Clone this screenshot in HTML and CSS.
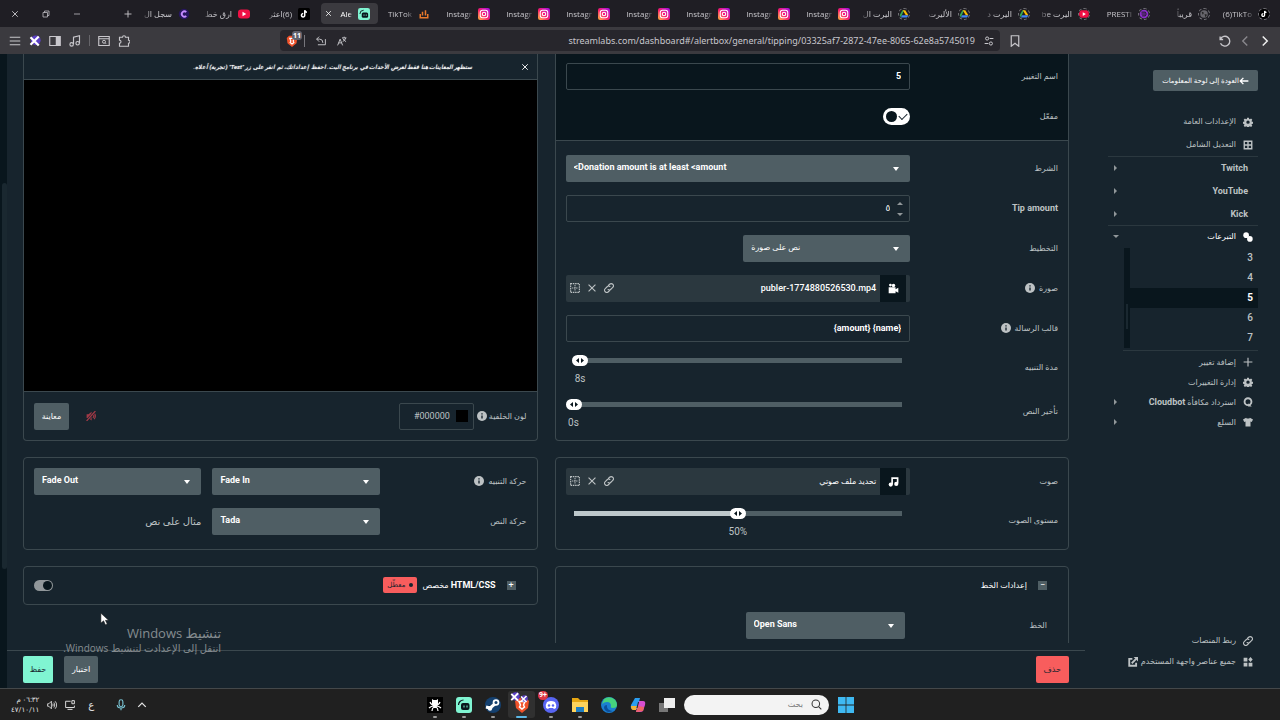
FILE: index.html
```html
<!DOCTYPE html>
<html lang="ar" dir="rtl">
<head>
  <meta charset="UTF-8">
  <meta name="viewport" content="width=device-width, initial-scale=1.0">
  <title>Alert Box</title>
  <link rel="stylesheet" href="styles.css">
</head>
<body>
  <svg class="sprite" viewBox="0 0 16 16">
    <symbol id="gear" viewBox="0 0 16 16"><path fill="currentColor" fill-rule="evenodd" d="M6.500 1h3l.4 2 1.200.5 1.800-1.100 2 2-1.200 1.800.5 1.200 2 .4v2.800l-2 .4-.5 1.200 1.200 1.700-2 2-1.800-1.100-1.200.5-.4 2h-3l-.4-2-1.200-.5-1.800 1.100-2-2 1.200-1.700-.5-1.200-2-.4V7.800l2-.4.5-1.200-1.200-1.800 2-2 1.800 1.100L6.100 3zM8 5.500a2.700 2.700 0 1 0 0 5.400 2.700 2.700 0 0 0 0-5.400z"/></symbol>
    <symbol id="grid" viewBox="0 0 16 16"><path fill="none" stroke="currentColor" stroke-width="2.200" d="M2 2h12v12H2zM8 2v12M2 8h12"/></symbol>
    <symbol id="tips" viewBox="0 0 16 16"><circle cx="5" cy="5" r="4.500" fill="currentColor"/><circle cx="11" cy="11" r="4.500" fill="currentColor"/></symbol>
    <symbol id="plus" viewBox="0 0 16 16"><path stroke="currentColor" stroke-width="1.800" d="M8 1v14M1 8h14"/></symbol>
    <symbol id="bot" viewBox="0 0 16 16"><circle cx="8" cy="7.500" r="5.500" fill="none" stroke="currentColor" stroke-width="3"/><path fill="currentColor" d="M9 10l5 5H8z"/></symbol>
    <symbol id="shirt" viewBox="0 0 16 16"><path fill="currentColor" d="M5 1c1 2 5 2 6 0l5 3-2 4-2-1v8H4V7L2 8 0 4z"/></symbol>
    <symbol id="link" viewBox="0 0 16 16"><path fill="none" stroke="currentColor" stroke-width="1.700" stroke-linecap="round" d="M7 4l2-2a3.400 3.400 0 0 1 5 5l-3 3a3.400 3.400 0 0 1-4.500.3M9 12l-2 2a3.400 3.400 0 0 1-5-5l3-3a3.400 3.400 0 0 1 4.500-.3"/></symbol>
    <symbol id="tiles" viewBox="0 0 16 16"><path fill="currentColor" d="M1 1h6v6H1zM1 9h6v6H1zM9 9h6v6H9zM12 0l3.500 4L12 8 8.500 4z"/></symbol>
    <symbol id="external" viewBox="0 0 16 16"><path fill="none" stroke="currentColor" stroke-width="3" d="M7 3H2v11h11V9M6 10l7-7"/><path fill="currentColor" d="M9 0h7v7z"/></symbol>
    <symbol id="info" viewBox="0 0 16 16"><circle cx="8" cy="8" r="8" fill="currentColor"/><path stroke="#17242d" stroke-width="2.200" d="M8 7v5M8 3.500v2"/></symbol>
    <symbol id="close" viewBox="0 0 16 16"><path stroke="currentColor" stroke-width="1.800" d="M2.500 2.500l11 11M13.500 2.500l-11 11"/></symbol>
    <symbol id="drag" viewBox="0 0 16 16"><path fill="none" stroke="currentColor" stroke-width="1.800" stroke-dasharray="2.400 1.200" d="M1 1h14v14H1z"/><path fill="none" stroke="currentColor" stroke-width="1.500" stroke-dasharray="2 1" d="M8 3v10M3 8h10"/></symbol>
    <symbol id="video" viewBox="0 0 16 16"><circle cx="3.500" cy="3" r="2" fill="currentColor"/><circle cx="8" cy="3.500" r="2.500" fill="currentColor"/><path fill="currentColor" d="M1 6h10v3l4-2v7l-4-2v3H1z"/></symbol>
    <symbol id="note" viewBox="0 0 16 16"><path fill="none" stroke="currentColor" stroke-width="2.400" d="M6 12V3h8v8"/><circle cx="4" cy="12.500" r="3" fill="currentColor"/><circle cx="12" cy="11.500" r="3" fill="currentColor"/></symbol>
    <symbol id="muted" viewBox="0 0 16 16"><path fill="currentColor" d="M1 5h3l5-4v14l-5-4H1z"/><path fill="none" stroke="currentColor" stroke-width="1.800" d="M11 5q3 3 0 6M13 3q4 5 0 10"/><path stroke="#17242d" stroke-width="4" d="M2 15L14 1"/><path stroke="currentColor" stroke-width="2" d="M1 16L15 0"/></symbol>
    <symbol id="arrow" viewBox="0 0 16 16"><path fill="none" stroke="currentColor" stroke-width="2.200" d="M15 8H2M7 3L2 8l5 5"/></symbol>
    <symbol id="instagram" viewBox="0 0 16 16"><rect width="16" height="16" rx="3" fill="url(#insta)"/><rect x="3" y="3" width="10" height="10" rx="3" fill="none" stroke="#fff" stroke-width="1.400"/><circle cx="8" cy="8" r="2.300" fill="none" stroke="#fff" stroke-width="1.400"/></symbol>
    <symbol id="youtube" viewBox="0 0 16 16"><rect y="2" width="16" height="12" rx="4" fill="#f01045"/><path fill="#fff" d="M6 5l5 3-5 3z"/></symbol>
    <symbol id="tiktok" viewBox="0 0 16 16"><rect width="16" height="16" rx="2" fill="#000"/><path fill="none" stroke="#fff" stroke-width="2" d="M7 7.500a2.200 2.200 0 1 0 2 2.200V3c.3 1.700 1.500 2.500 3 2.500"/></symbol>
    <symbol id="drive" viewBox="0 0 16 16"><path fill="#34a853" d="M8 2L5.500 2 1 10l2 3.500z"/><path fill="#fbbc04" d="M6 2h4l5 8h-4z"/><path fill="#4285f4" d="M5 10h10l-2 3.500H3z"/></symbol>
    <symbol id="slabs" viewBox="0 0 16 16"><rect width="16" height="16" rx="3" fill="#80f5d2"/><rect x="5" y="6" width="8.500" height="7" rx="2" fill="#09161d"/><path fill="none" stroke="#09161d" stroke-width="1.200" d="M2.500 8a5 5 0 0 1 5-5"/><path stroke="#80f5d2" d="M8 8.500v2M11 8.500v2"/></symbol>
    <symbol id="brave" viewBox="0 0 16 16"><path fill="#f0522a" d="M4 1h8l3 3-1 7-6 5-6-5-1-7z"/><path fill="none" stroke="#fff" stroke-width="1.500" d="M5 4.500h6L9.500 8l1 2L8 12l-2.500-2 1-2z"/></symbol>
    <symbol id="xlogo" viewBox="0 0 16 16"><circle cx="9" cy="7" r="6.500" fill="#5b3fc4"/><path stroke="#fff" stroke-width="3" d="M2 3l11 11M13 2L2 13"/></symbol>
    <linearGradient id="insta" x1="0" y1="1" x2="1" y2="0"><stop offset="0" stop-color="#ffc23d"/><stop offset=".45" stop-color="#fb1c6c"/><stop offset="1" stop-color="#a10bee"/></linearGradient>
  </svg>

  <header class="browser">
    <div class="tabs">
      <a class="tab" href="#"><svg class="ring"><use href="#tiktok"/></svg><span class="ltr">(6)TikTo</span></a>
      <a class="tab" href="#"><svg class="ring" viewBox="0 0 16 16"><circle cx="8" cy="8" r="6" fill="#66656b"/><path fill="#222" d="M4 4l4 2-2 3zM9 8l4 1-3 4z"/></svg><span>قريباً</span></a>
      <a class="tab" href="#"><svg class="ring" viewBox="0 0 16 16"><circle cx="8" cy="8" r="7" fill="#8b2fc9"/><path fill="none" stroke="#1f1e24" stroke-width="1.600" d="M4 5h6q3 3 0 6H5M4 8h6"/></svg><span class="ltr">PRESTI</span></a>
      <a class="tab" href="#"><svg class="ring"><use href="#youtube"/></svg><span>اليرت be</span></a>
      <a class="tab" href="#"><svg class="ring"><use href="#drive"/></svg><span>اليرت د</span></a>
      <a class="tab" href="#"><svg class="ring"><use href="#drive"/></svg><span>الأليرت</span></a>
      <a class="tab" href="#"><svg class="ring"><use href="#drive"/></svg><span>اليرت ال</span></a>
      <a class="tab" href="#"><svg><use href="#instagram"/></svg><span class="ltr">Instagr</span></a>
      <a class="tab" href="#"><svg><use href="#instagram"/></svg><span class="ltr">Instagr</span></a>
      <a class="tab" href="#"><svg><use href="#instagram"/></svg><span class="ltr">Instagr</span></a>
      <a class="tab" href="#"><svg><use href="#instagram"/></svg><span class="ltr">Instagr</span></a>
      <a class="tab" href="#"><svg><use href="#instagram"/></svg><span class="ltr">Instagr</span></a>
      <a class="tab" href="#"><svg><use href="#instagram"/></svg><span class="ltr">Instagr</span></a>
      <a class="tab" href="#"><svg><use href="#instagram"/></svg><span class="ltr">Instagr</span></a>
      <a class="tab" href="#"><svg viewBox="0 0 16 16"><path fill="none" stroke="#e8792b" stroke-width="2" d="M3 8v5h10V8M6 10V5M10 10V3"/></svg><span class="ltr">TikTok</span></a>
      <a class="tab active" href="#"><svg><use href="#slabs"/></svg><span class="ltr">Ale</span><svg class="tab-close"><use href="#close"/></svg></a>
      <a class="tab" href="#"><svg><use href="#tiktok"/></svg><span>(6)اعثر</span></a>
      <a class="tab" href="#"><svg><use href="#youtube"/></svg><span>ارق خط</span></a>
      <a class="tab" href="#"><svg viewBox="0 0 16 16"><circle cx="8" cy="8" r="7" fill="#26165e"/><path fill="none" stroke="#c48bff" stroke-width="2.400" d="M11 5.500a3.500 3.500 0 1 0 0 5"/></svg><span>سجل ال</span></a>
      <button class="new-tab" aria-label="+"><svg><use href="#plus"/></svg></button>
      <div class="window-buttons">
        <button aria-label="تصغير"><svg viewBox="0 0 16 16"><path stroke="currentColor" stroke-width="1.500" d="M2 8h12"/></svg></button>
        <button aria-label="استعادة"><svg viewBox="0 0 16 16"><path fill="none" stroke="currentColor" stroke-width="1.500" d="M2 5h9v9H2zM5 5V2h9v9h-3"/></svg></button>
        <button aria-label="إغلاق"><svg><use href="#close"/></svg></button>
      </div>
    </div>
    <div class="toolbar">
      <div class="nav">
        <button aria-label="التالي"><svg viewBox="0 0 16 16"><path fill="none" stroke="#eee" stroke-width="2" d="M5 2l6 6-6 6"/></svg></button>
        <button aria-label="السابق"><svg viewBox="0 0 16 16"><path fill="none" stroke="#8a898e" stroke-width="1.800" d="M11 2L5 8l6 6"/></svg></button>
        <button aria-label="تحديث"><svg viewBox="0 0 16 16"><path fill="none" stroke="currentColor" stroke-width="1.800" d="M2 5.500A6.500 6.500 0 1 1 2 11M1.500 2v4h4"/></svg></button>
        <button class="bookmark" aria-label="إشارة"><svg viewBox="0 0 16 16"><path fill="none" stroke="currentColor" stroke-width="1.600" d="M3 1h10v14l-5-4-5 4z"/></svg></button>
      </div>
      <div class="address">
        <svg viewBox="0 0 16 16"><path fill="none" stroke="currentColor" stroke-width="1.600" d="M9 4h6M7 12H1"/><circle cx="5" cy="4" r="2.500" fill="none" stroke="currentColor" stroke-width="1.600"/><circle cx="11" cy="12" r="2.500" fill="none" stroke="currentColor" stroke-width="1.600"/></svg>
        <input type="text" dir="ltr" aria-label="العنوان" value="streamlabs.com/dashboard#/alertbox/general/tipping/03325af7-2872-47ee-8065-62e8a5745019">
        <svg viewBox="0 0 16 16"><path fill="none" stroke="currentColor" stroke-width="1.500" d="M1 15l4-10 4 10M2.500 11h5M8 3h7M11.500 1v2M14 3q-1 4-5 6M9.500 4q1 3 5 5"/></svg>
        <svg viewBox="0 0 16 16"><path fill="none" stroke="currentColor" stroke-width="1.500" d="M5 1L1 5l4 4M1 5h5q5 0 5 6M3 14h12V5"/></svg>
        <span class="shield"><svg><use href="#brave"/></svg><b>11</b></span>
      </div>
      <div class="extensions">
        <svg viewBox="0 0 16 16"><path fill="none" stroke="currentColor" stroke-width="1.500" d="M2 3h4q0-2 2-2t2 2h4v4q2 0 2 2t-2 2v4H2v-4q2 0 2-2T2 7z"/></svg>
        <svg viewBox="0 0 16 16"><path fill="none" stroke="currentColor" stroke-width="1.500" d="M1 2h14v12H1zM1 5h14"/><circle cx="8" cy="9" r="2" fill="none" stroke="currentColor" stroke-width="1.300"/><path stroke="currentColor" d="M9.500 10.500L11 12"/></svg>
        <i></i>
        <svg viewBox="0 0 16 16"><path fill="none" stroke="currentColor" stroke-width="1.500" d="M6 12V3l8-2v10"/><circle cx="3.500" cy="12.500" r="2.300" fill="none" stroke="currentColor" stroke-width="1.500"/><circle cx="11.500" cy="11" r="2.300" fill="none" stroke="currentColor" stroke-width="1.500"/></svg>
        <svg viewBox="0 0 16 16"><path fill="none" stroke="currentColor" stroke-width="1.500" d="M1 2h14v12H1z"/><path fill="currentColor" d="M9 2h6v12H9z"/></svg>
        <svg><use href="#xlogo"/></svg>
        <svg viewBox="0 0 16 16"><path stroke="currentColor" stroke-width="1.500" d="M1 3h14M1 8h14M1 13h14"/></svg>
      </div>
    </div>
  </header>

  <div class="app">
    <aside class="sidebar">
      <a class="back" href="#"><svg><use href="#arrow"/></svg><span>العودة إلى لوحة المعلومات</span></a>
      <nav>
        <a class="item" href="#"><svg><use href="#gear"/></svg><span>الإعدادات العامة</span></a>
        <a class="item" href="#"><svg><use href="#grid"/></svg><span>التعديل الشامل</span></a>
        <hr>
        <a class="item platform" href="#">Twitch</a>
        <a class="item platform" href="#">YouTube</a>
        <a class="item platform" href="#">Kick</a>
        <hr>
        <a class="item open" href="#"><svg><use href="#tips"/></svg><span>التبرعات</span></a>
        <div class="variations">
          <div class="numbers">
            <a href="#">3</a>
            <a href="#">4</a>
            <a class="current" href="#">5</a>
            <a href="#">6</a>
            <a href="#">7</a>
          </div>
          <div class="bar"><i></i></div>
        </div>
        <hr class="short">
        <a class="item small" href="#"><svg><use href="#plus"/></svg><span>إضافة تغيير</span></a>
        <a class="item small" href="#"><svg><use href="#gear"/></svg><span>إدارة التغييرات</span></a>
        <a class="item small more" href="#"><svg><use href="#bot"/></svg><span>استرداد مكافأة <b>Cloudbot</b></span></a>
        <a class="item small more" href="#"><svg><use href="#shirt"/></svg><span>السلع</span></a>
      </nav>
      <div class="bottom-links">
        <a class="item" href="#"><svg><use href="#link"/></svg><span>ربط المنصات</span></a>
        <a class="item" href="#"><svg><use href="#tiles"/></svg><span>جميع عناصر واجهة المستخدم</span><svg class="ext"><use href="#external"/></svg></a>
      </div>
    </aside>

    <main>
      <div class="columns">
        <div class="column">
          <section class="card first">
            <div class="head">
              <div class="row">
                <label for="name">اسم التغيير</label>
                <div class="control"><input class="text" id="name" type="text" value="5"></div>
              </div>
              <div class="row">
                <label for="enabled">مفعّل</label>
                <div class="control"><input class="toggle on" id="enabled" type="checkbox" checked></div>
              </div>
            </div>
            <div class="fields">
              <div class="row">
                <label for="condition">الشرط</label>
                <div class="control select"><select id="condition"><option>&lt;Donation amount is at least &lt;amount</option></select></div>
              </div>
              <div class="row">
                <label class="latin" for="tip">Tip amount</label>
                <div class="control number">
                  <input class="text" id="tip" type="text" inputmode="numeric" value="٥">
                  <span class="spin"><button aria-label="زيادة"></button><button class="down" aria-label="إنقاص"></button></span>
                </div>
              </div>
              <div class="row">
                <label for="layout">التخطيط</label>
                <div class="control"><div class="select half"><select class="ar" id="layout"><option>نص على صورة</option></select></div></div>
              </div>
              <div class="row">
                <span class="label">صورة <svg><use href="#info"/></svg></span>
                <div class="control media">
                  <button class="kind" aria-label="صورة"><svg><use href="#video"/></svg></button>
                  <span class="file">publer-1774880526530.mp4</span>
                  <button aria-label="رابط"><svg><use href="#link"/></svg></button>
                  <button aria-label="إزالة"><svg><use href="#close"/></svg></button>
                  <button aria-label="سحب"><svg><use href="#drag"/></svg></button>
                </div>
              </div>
              <div class="row">
                <label for="template">قالب الرسالة <svg><use href="#info"/></svg></label>
                <div class="control"><input class="text" id="template" dir="ltr" type="text" value="{amount} {name}"></div>
              </div>
              <div class="row slider-row">
                <label for="duration">مدة التنبيه</label>
                <div class="control slider" style="--pos: 0.02">
                  <input id="duration" type="range" min="2" max="300" value="8">
                  <output for="duration">8s</output>
                </div>
              </div>
              <div class="row slider-row">
                <label for="delay">تأخير النص</label>
                <div class="control slider" style="--pos: 0">
                  <input id="delay" type="range" min="0" max="60" value="0">
                  <output for="delay">0s</output>
                </div>
              </div>
            </div>
          </section>

          <section class="card sound">
            <div class="row">
              <span class="label">صوت</span>
              <div class="control media">
                <button class="kind" aria-label="صوت"><svg><use href="#note"/></svg></button>
                <span class="file ar">تحديد ملف صوتي</span>
                <button aria-label="رابط"><svg><use href="#link"/></svg></button>
                <button aria-label="إزالة"><svg><use href="#close"/></svg></button>
                <button aria-label="سحب"><svg><use href="#drag"/></svg></button>
              </div>
            </div>
            <div class="row slider-row">
              <label for="volume">مستوى الصوت</label>
              <div class="control slider filled" style="--pos: 0.5">
                <input id="volume" type="range" min="0" max="100" value="50">
                <output for="volume" dir="ltr">50%</output>
              </div>
            </div>
          </section>

          <section class="card font-card">
            <div class="title"><button class="fold" aria-label="طي">−</button><h2>إعدادات الخط</h2></div>
            <div class="row">
              <label for="font">الخط</label>
              <div class="control"><div class="select half"><select id="font"><option>Open Sans</option></select></div></div>
            </div>
          </section>
        </div>

        <div class="column">
          <section class="card first preview">
            <div class="notice">
              <button aria-label="إغلاق"><svg><use href="#close"/></svg></button>
              <p>ستظهر المعاينات هنا فقط لعرض الأحداث في برنامج البث. احفظ إعداداتك، ثم انقر على زر "Test" (تجربة) أعلاه.</p>
            </div>
            <div class="screen"></div>
            <div class="preview-bar">
              <label for="color">لون الخلفية <svg><use href="#info"/></svg></label>
              <div class="color"><i></i><input id="color" type="text" dir="ltr" value="#000000"></div>
              <svg class="mute"><use href="#muted"/></svg>
              <button class="btn">معاينة</button>
            </div>
          </section>

          <section class="card animations">
            <div class="row">
              <label for="anim-in">حركة التنبيه <svg><use href="#info"/></svg></label>
              <div class="select"><select id="anim-in"><option>Fade In</option></select></div>
              <div class="select"><select aria-label="حركة الخروج"><option>Fade Out</option></select></div>
            </div>
            <div class="row">
              <label for="anim-text">حركة النص</label>
              <div class="select"><select id="anim-text"><option>Tada</option></select></div>
              <p class="sample">مثال على نص</p>
            </div>
          </section>

          <section class="card html-card">
            <div class="title">
              <button class="fold" aria-label="توسيع">+</button>
              <h2><b>HTML/CSS</b> مخصص</h2>
              <span class="tag">معطّل</span>
              <input class="toggle off" type="checkbox" aria-label="HTML/CSS مخصص">
            </div>
          </section>
        </div>
      </div>

      <footer class="actions">
        <button class="btn delete">حذف</button>
        <button class="btn test">اختبار</button>
        <button class="btn save">حفظ</button>
      </footer>
    </main>
    <div class="page-scroll"><i></i></div>
  </div>

  <div class="taskbar">
    <div class="task-apps">
      <svg class="start" viewBox="0 0 16 16"><path fill="#3fb9f2" d="M0 0h7.600v7.600H0zM8.400 0H16v7.600H8.400zM0 8.400h7.600V16H0zM8.400 8.400H16V16H8.400z"/></svg>
      <div class="search">
        <svg viewBox="0 0 16 16"><circle cx="7" cy="7" r="5.500" fill="none" stroke="#333" stroke-width="1.500"/><path stroke="#333" stroke-width="1.500" d="M11 11l4 4"/></svg>
        <input type="search" placeholder="بحث" aria-label="بحث">
      </div>
      <span class="app-icon"><svg viewBox="0 0 16 16"><path fill="#777" d="M0 6h9v9H0z"/><path fill="#eee" d="M5 1h11v10H5z"/></svg></span>
      <span class="app-icon"><svg viewBox="0 0 16 16"><path fill="#2b9df0" d="M5 1h5L7 12H3Q0 12 1 8z"/><path fill="#f2b23a" d="M1 9h6l-1 4H3Q1 13 1 9z"/><path fill="#d84ed0" d="M9 4h4q3 0 2 4l-2 6q-1 1-3 1H6z"/><path fill="#ef6565" d="M8 9l6 1-1 4-7 1z"/><path fill="#222" d="M8 5h1L7.500 11h-1z"/></svg></span>
      <span class="app-icon"><svg viewBox="0 0 16 16"><circle cx="8" cy="8" r="8" fill="#1b7fd0"/><path fill="#46d27c" d="M3 2a8 8 0 0 1 13 6q0 3-4 3-3 0-2-2 0-4-4-4-3 0-5 2z"/><path fill="#0b4f9c" d="M6 8q-1 5 6 6-7 3-9-3 0-3 3-3z"/></svg></span>
      <span class="app-icon run"><svg viewBox="0 0 16 16"><path fill="#e8a712" d="M0 1h6l2 2h8v4H0z"/><path fill="#ffd45c" d="M0 5h16v10H0z"/><path fill="#1f7fc4" d="M4 10h8v5H4z"/></svg></span>
      <span class="app-icon run"><svg viewBox="0 0 16 16"><circle cx="8" cy="8" r="8" fill="#5865f2"/><path fill="#fff" d="M4 5q4-2 8 0 2 3 1 6l-2 1-1-1H6l-1 1-2-1q-1-3 1-6z"/><circle cx="6" cy="8.500" r="1.200" fill="#5865f2"/><circle cx="10" cy="8.500" r="1.200" fill="#5865f2"/></svg><b>9+</b></span>
      <span class="app-icon focused"><svg><use href="#brave"/></svg><svg class="mini"><use href="#xlogo"/></svg><svg class="mini second"><use href="#xlogo"/></svg></span>
      <span class="app-icon run"><svg viewBox="0 0 16 16"><circle cx="8" cy="8" r="8" fill="#14406f"/><path stroke="#fff" stroke-width="3" d="M1 10l4 1 6-5"/><circle cx="11" cy="5.500" r="3.300" fill="#fff"/><circle cx="11" cy="5.500" r="1.500" fill="#14406f"/><circle cx="5" cy="11.500" r="2.200" fill="#fff"/></svg></span>
      <span class="app-icon run"><svg><use href="#slabs"/></svg></span>
      <span class="app-icon run"><svg viewBox="0 0 16 16"><path fill="#000" d="M0 0h16v16H0z"/><path fill="none" stroke="#fff" stroke-width="1.200" d="M7 8Q4 8 3 5M7 9Q4 9 2 11M7 10q-2 1-2 4M9 8q3 0 4-3M9 9q3 0 5 2M9 10q2 1 2 4"/><path fill="#fff" d="M5 2l1.500 1h3L11 2v5l-2 4H7L5 7z"/></svg></span>
    </div>
    <div class="tray">
      <svg viewBox="0 0 16 16"><path fill="none" stroke="currentColor" stroke-width="2" d="M2 11l6-6 6 6"/></svg>
      <svg class="mic" viewBox="0 0 16 16"><rect x="5.500" y="1" width="5" height="9" rx="2.500" fill="none" stroke="#7ac4d4" stroke-width="1.500"/><path fill="none" stroke="#7ac4d4" stroke-width="1.500" d="M3 8q0 4 5 4t5-4M8 12v3"/></svg>
      <span class="lang">ع</span>
      <svg viewBox="0 0 16 16"><path fill="none" stroke="currentColor" stroke-width="1.500" d="M9 2H1v10h14V9M4 15h8M11 1h4v5h-4z"/></svg>
      <svg viewBox="0 0 16 16"><path fill="none" stroke="currentColor" stroke-width="1.400" d="M1 6h2l4-4v12l-4-4H1zM9 6q2 2 0 4M11 4q3 4 0 8M13 2q5 6 0 12"/></svg>
      <div class="clock"><span>٠٦:٣٢ م</span><span>٤٧/١٠/١١</span></div>
    </div>
  </div>

  <div class="watermark"><p>تنشيط Windows</p><span>انتقل إلى الإعدادت لتنشيط Windows.</span></div>
  <svg class="cursor" viewBox="0 0 10 15"><path fill="#fff" stroke="#222" stroke-width=".6" d="M1 1v11l3-2.500 2 4.500 2-1-2-4h3.500z"/></svg>
</body>
</html>
```
FILE: styles.css
```css
* {
  box-sizing: border-box;
}
body {
  display: flex;
  flex-direction: column;
  height: 100vh;
  margin: 0;
  overflow: hidden;
  background-color: #17242d;
  color: #bdc2c4;
  font-family: Roboto, "DejaVu Sans", sans-serif;
  font-size: 8px;
}
a {
  color: inherit;
  text-decoration: none;
}
button {
  display: flex;
  align-items: center;
  justify-content: center;
  padding: 0;
  border: 0;
  background: none;
  color: inherit;
  font: inherit;
}
input,
select {
  font: inherit;
  color: inherit;
}
p,
h2 {
  margin: 0;
}
svg {
  flex: none;
  width: 10px;
  height: 10px;
}
.sprite {
  position: absolute;
  width: 0;
  height: 0;
}
.ltr {
  direction: ltr;
}

/* browser */
.browser {
  flex: none;
  background-color: #1f1e24;
  color: #c8c7cc;
  font-family: "Open Sans", "DejaVu Sans", sans-serif;
}
.tabs {
  display: flex;
  align-items: center;
  gap: 3px;
  height: 27px;
  padding: 0 2px;
}
.tab {
  display: flex;
  align-items: center;
  gap: 6px;
  width: 57px;
  height: 21px;
  padding: 0 8px 0 0;
  border-radius: 4px;
}
.tab svg {
  width: 12px;
  height: 12px;
}
.tab .ring {
  border: 1px dashed #77767c;
  border-radius: 50%;
}
.tab span {
  white-space: nowrap;
  -webkit-mask-image: linear-gradient(to left, #000 75%, rgba(0, 0, 0, 0.3));
  mask-image: linear-gradient(to left, #000 75%, rgba(0, 0, 0, 0.3));
}
.tab span.ltr {
  -webkit-mask-image: linear-gradient(to right, #000 75%, rgba(0, 0, 0, 0.3));
  mask-image: linear-gradient(to right, #000 75%, rgba(0, 0, 0, 0.3));
}
.tab.active {
  background-color: #3b3a3f;
  color: #fff;
}
.tab .tab-close {
  width: 7px;
  height: 7px;
  margin-right: 2px;
}
.new-tab {
  margin-right: 6px;
}
.new-tab svg,
.window-buttons svg {
  width: 8px;
  height: 8px;
}
.window-buttons {
  display: flex;
  gap: 23px;
  margin-right: auto;
  padding-left: 9px;
}
.toolbar {
  display: grid;
  grid-template-columns: 280fr 720fr 280fr;
  align-items: center;
  height: 27px;
  background-color: #3b3a3f;
}
.toolbar svg {
  width: 12px;
  height: 12px;
}
.nav,
.extensions {
  display: flex;
  align-items: center;
  gap: 8px;
  padding: 0 9px;
}
.nav .bookmark {
  margin-right: auto;
}
.extensions {
  justify-content: flex-end;
}
.extensions i {
  width: 1px;
  height: 11px;
  background-color: #66656a;
}
.address {
  display: flex;
  align-items: center;
  gap: 11px;
  height: 21px;
  padding: 0 6px;
  border-radius: 4px;
  background-color: #27262c;
}
.toolbar .address > svg {
  width: 10px;
  height: 10px;
}
.address input {
  flex: 1;
  min-width: 0;
  margin-right: -2px;
  padding: 0;
  border: 0;
  background: none;
  font-family: "Noto Sans", sans-serif;
  font-size: 9px;
  text-align: right;
}
.shield {
  position: relative;
  display: flex;
  padding-right: 6px;
  border-right: 1px solid #77767c;
}
.shield b {
  position: absolute;
  top: -4px;
  right: 2px;
  padding: 0 1px;
  border-radius: 3px;
  background-color: #62616c;
  color: #fff;
  font-size: 7px;
  line-height: 9px;
}

/* app */
.app {
  display: flex;
  flex: 1;
  min-height: 0;
}
.page-scroll {
  width: 7px;
  padding-top: 129px;
  background-color: #09161d;
}
.page-scroll i {
  display: block;
  width: 5px;
  height: 386px;
  border-radius: 3px;
  background-color: #1a2830;
}
.sidebar {
  display: flex;
  flex-direction: column;
  flex: none;
  width: 195px;
  padding: 16px 22px;
}
.back {
  display: flex;
  align-items: center;
  align-self: flex-start;
  justify-content: center;
  width: 105px;
  height: 21px;
  border-radius: 2px;
  background-color: #4f5e64;
  color: #fff;
  font-size: 7px;
  white-space: nowrap;
}
.sidebar nav {
  width: 150px;
  margin-top: 19px;
}
.sidebar hr {
  margin: 0 0 -1px;
  border: 0;
  border-top: 1px solid #2b383f;
}
.sidebar hr.short {
  width: 135px;
  margin: 2px 0 1px;
}
.item {
  display: flex;
  align-items: center;
  gap: 7px;
  height: 23px;
  padding-right: 5px;
  white-space: nowrap;
}
.item b {
  font-size: 9px;
  font-weight: 700;
}
.item .ext {
  margin-right: -4px;
}
.platform {
  padding-right: 10px;
  font-size: 9px;
  font-weight: 700;
}
.small {
  height: 20px;
}
.platform::after,
.more::after {
  content: "";
  margin: 0 auto 0 6px;
  border: 3px solid transparent;
  border-left-color: #91979a;
  border-right: 0;
}
.open {
  color: #fff;
}
.open::after {
  content: "";
  margin: 0 auto 0 5px;
  border: 3px solid transparent;
  border-top-color: #91979a;
  border-bottom: 0;
}
.variations {
  display: flex;
  width: 134px;
}
.numbers {
  flex: 1;
  font-size: 10px;
  font-weight: 500;
  line-height: 20px;
}
.numbers a {
  display: block;
  padding-right: 5px;
}
.numbers .current {
  background-color: #09161d;
  color: #fff;
  font-weight: 700;
}
.bar {
  width: 6px;
  padding: 56px 2px 0;
  background-color: #09161d;
}
.bar i {
  display: block;
  height: 25px;
  background-color: #1a2830;
}
.bottom-links {
  margin-top: auto;
}
.bottom-links .item {
  height: 21px;
}

main {
  display: flex;
  flex: 1;
  flex-direction: column;
  min-width: 0;
}
.columns {
  display: grid;
  flex: 1;
  grid-template-columns: 1fr 1fr;
  gap: 17px;
  min-height: 0;
  margin-bottom: 7px;
  padding: 0 16px;
  overflow: hidden;
}
.column {
  display: flex;
  flex-direction: column;
  gap: 16px;
}
.card {
  flex: none;
  padding: 3px 10px;
  border: 1px solid #3b484e;
  border-radius: 4px;
}
.card.first {
  padding: 0;
  border-top: 0;
  border-radius: 0 0 4px 4px;
}
.card.sound {
  padding-bottom: 4px;
}
.head {
  padding: 2px 10px 4px;
  border-bottom: 1px solid #3b484e;
  background-color: #09161d;
}
.fields {
  padding: 7px 10px 4px;
}
.row {
  display: flex;
  align-items: center;
  justify-content: space-between;
  height: 40px;
}
.row label,
.label {
  display: flex;
  align-items: center;
  gap: 4px;
}
.row .latin {
  font-size: 9px;
  font-weight: 700;
}
.control {
  width: 70%;
}
.text {
  display: block;
  width: 100%;
  height: 27px;
  padding: 0 8px;
  border: 1px solid #3b484e;
  border-radius: 2px;
  background: none;
  color: #fff;
  font-size: 9px;
  font-weight: 700;
  text-align: right;
}
.number {
  position: relative;
}
.number .text {
  padding-right: 19px;
  font-weight: 400;
}
.spin {
  position: absolute;
  top: 7px;
  right: 7px;
  display: flex;
  flex-direction: column;
  gap: 8px;
}
.spin button {
  border: 3px solid transparent;
  border-top: 0;
  border-bottom-color: #91979a;
}
.spin .down {
  border-top: 3px solid #91979a;
  border-bottom: 0;
}
.select {
  position: relative;
}
.select.half {
  width: 167px;
}
.select select {
  display: block;
  width: 100%;
  height: 27px;
  padding: 0 8px 2px;
  border: 0;
  border-radius: 2px;
  background-color: #4f5e64;
  color: #fff;
  direction: ltr;
  font-size: 9px;
  font-weight: 700;
  appearance: none;
}
.select select.ar {
  font-size: 8px;
  font-weight: 400;
}
.select::after {
  content: "";
  position: absolute;
  top: 12px;
  right: 11px;
  border: 3px solid transparent;
  border-top: 4px solid #fff;
  border-bottom: 0;
}
.toggle {
  position: relative;
  display: block;
  margin: 0;
  appearance: none;
}
.toggle.on {
  width: 27px;
  height: 17px;
  border-radius: 9px;
  background-color: #fff;
}
.toggle.on::before {
  content: "";
  position: absolute;
  top: 3px;
  left: 3px;
  width: 11px;
  height: 11px;
  border-radius: 50%;
  background-color: #09161d;
}
.toggle.on::after {
  content: "";
  position: absolute;
  top: 5px;
  right: 3px;
  width: 7px;
  height: 4px;
  border: solid #17242d;
  border-width: 0 0 1px 1px;
  transform: rotate(-45deg);
}
.media {
  display: flex;
  align-items: center;
  gap: 7px;
  height: 27px;
  padding: 0 4px;
  border-radius: 2px;
  background-color: #2b383f;
}
.media .kind {
  width: 26px;
  height: 27px;
  margin-left: -3px;
  background-color: #09161d;
  color: #fff;
}
.media .kind svg {
  width: 11px;
  height: 11px;
}
.file {
  flex: 1;
  color: #fff;
  font-size: 9px;
  font-weight: 500;
}
.file.ar {
  font-size: 8px;
}
.slider-row {
  height: 44px;
}
.slider-row label {
  padding-bottom: 6px;
}
.slider {
  position: relative;
  align-self: stretch;
  padding-top: 6px;
}
.slider input {
  --fill: #4f5e64;
  display: block;
  width: 100%;
  height: 12px;
  margin: 0;
  background: linear-gradient(to right, var(--fill) calc(var(--pos) * 100%), #4f5e64 0) center / calc(100% - 16px) 5px no-repeat;
  direction: ltr;
  appearance: none;
}
.slider.filled input {
  --fill: #bdc8cb;
}
.slider input::-webkit-slider-thumb {
  width: 16px;
  height: 11px;
  border-radius: 6px;
  background: #fff url("data:image/svg+xml,%3Csvg xmlns='http://www.w3.org/2000/svg' viewBox='0 0 16 11'%3E%3Cpath fill='%2309161d' d='M7 3v5L4 5.500zM9 3v5l3-2.500z'/%3E%3C/svg%3E");
  appearance: none;
}
.slider output {
  position: absolute;
  top: 25px;
  left: calc(8px + (100% - 16px) * var(--pos));
  font-size: 10px;
  line-height: 12px;
  transform: translateX(-50%);
}
.title {
  display: flex;
  align-items: center;
  gap: 11px;
  height: 30px;
}
.title h2 {
  color: #fff;
  font-size: 8px;
  font-weight: 500;
}
.title h2 b {
  font-size: 9px;
  font-weight: 700;
}
.fold {
  width: 9px;
  height: 9px;
  background-color: #4f5e64;
  color: #fff;
  font-size: 9px;
  line-height: 9px;
}
.font-card {
  padding: 3px 21px;
}
.font-card .row {
  height: 50px;
}
.font-card .control {
  width: 328px;
}
.font-card .half {
  width: 159px;
}

/* preview column */
.notice {
  display: flex;
  align-items: center;
  gap: 48px;
  height: 26px;
  padding: 0 8px;
  border-bottom: 1px solid #3b484e;
  color: #fff;
}
.notice svg {
  width: 8px;
  height: 8px;
}
.notice p {
  font-size: 6px;
  font-style: italic;
  text-shadow: 0 0 1px #fff;
  white-space: nowrap;
}
.screen {
  height: 311px;
  background-color: #000;
}
.preview-bar {
  display: flex;
  align-items: center;
  height: 49px;
  padding: 0 10px;
  border-top: 1px solid #3b484e;
}
.preview-bar label {
  display: flex;
  align-items: center;
  gap: 2px;
}
.color {
  display: flex;
  align-items: center;
  gap: 6px;
  width: 75px;
  height: 27px;
  margin-right: 3px;
  padding: 0 5px;
  border: 1px solid #3b484e;
  border-radius: 2px;
}
.color i {
  flex: none;
  width: 12px;
  height: 12px;
  background-color: #000;
}
.color input {
  width: 45px;
  padding: 0;
  border: 0;
  background: none;
  font-size: 9px;
  text-align: right;
}
.mute {
  margin-right: auto;
  color: #a33a47;
}
.btn {
  height: 27px;
  padding: 0 8px;
  border-radius: 2px;
  background-color: #4f5e64;
  color: #fff;
}
.preview-bar .btn {
  width: 35px;
  margin-right: 17px;
  padding: 0;
}
.animations {
  padding-bottom: 8px;
}
.animations .row {
  gap: 11px;
}
.animations label {
  flex: 1;
}
.animations .select,
.sample {
  width: 34%;
}
.sample {
  font-size: 10px;
  font-weight: 500;
}
.html-card {
  padding-bottom: 4px;
}
.html-card .title {
  padding-right: 11px;
}
.tag {
  display: flex;
  align-items: center;
  gap: 4px;
  height: 16px;
  margin-right: -6px;
  padding: 0 4px;
  border-radius: 2px;
  background-color: #f85d5d;
  color: #17242d;
  font-size: 7px;
}
.tag::before {
  content: "";
  width: 4px;
  height: 4px;
  border-radius: 50%;
  background-color: #17242d;
}
.toggle.off {
  width: 19px;
  height: 11px;
  margin-right: auto;
  border-radius: 6px;
  background-color: #91979a;
}
.toggle.off::before {
  content: "";
  position: absolute;
  top: 1px;
  right: 1px;
  width: 9px;
  height: 9px;
  border-radius: 50%;
  background-color: #09161d;
}
.actions {
  display: flex;
  align-items: center;
  gap: 11px;
  flex: none;
  height: 38px;
  padding: 0 16px;
  border-top: 1px solid #3b484e;
}
.actions .delete {
  margin-left: auto;
  background-color: #f85d5d;
  color: #17242d;
}
.actions .save {
  width: 30px;
  padding: 0;
  background-color: #80f5d2;
  color: #17242d;
}

/* taskbar */
.taskbar {
  display: flex;
  flex: none;
  align-items: center;
  height: 32px;
  border-top: 1px solid #44484a;
  background-color: #202020;
  color: #e4e4e4;
}
.task-apps {
  display: flex;
  flex: 1;
  align-items: center;
  padding-right: 426px;
}
.start {
  width: 16px;
  height: 16px;
}
.search {
  display: flex;
  align-items: center;
  gap: 8px;
  width: 145px;
  height: 20px;
  margin: 0 9px 0 4px;
  padding: 0 7px;
  border-radius: 10px;
  background-color: #f3f3f3;
  color: #555;
}
.search svg {
  width: 11px;
  height: 11px;
}
.search input {
  width: 100px;
  padding: 0;
  border: 0;
  outline: 0;
  background: none;
  font-size: 8px;
}
.app-icon {
  position: relative;
  display: flex;
  align-items: center;
  justify-content: center;
  width: 27px;
  height: 27px;
  margin-left: 2px;
  border-radius: 3px;
}
.app-icon svg {
  width: 16px;
  height: 16px;
}
.app-icon b {
  position: absolute;
  top: 0;
  left: 1px;
  border-radius: 5px;
  padding: 0 1px;
  background-color: #dc3545;
  color: #fff;
  direction: ltr;
  font-size: 7px;
  line-height: 9px;
}
.app-icon .mini {
  position: absolute;
  top: 1px;
  left: 2px;
  width: 10px;
  height: 10px;
}
.app-icon .second {
  top: 4px;
  left: 12px;
  width: 8px;
  height: 8px;
}
.app-icon.focused {
  background-color: #303030;
}
.run::after,
.focused::after {
  content: "";
  position: absolute;
  bottom: 0;
  width: 4px;
  height: 2px;
  border-radius: 1px;
  background-color: #999;
}
.focused::after {
  width: 11px;
  background-color: #5cb8e6;
}
.tray {
  display: flex;
  align-items: center;
  gap: 8px;
  padding-left: 11px;
}
.tray .mic {
  width: 12px;
  height: 12px;
  margin-right: 2px;
}
.lang {
  margin: 0 13px 0 5px;
  font-size: 10px;
}
.clock {
  display: flex;
  flex-direction: column;
  font-size: 7px;
  line-height: 10px;
}
.watermark {
  position: absolute;
  bottom: 64px;
  left: 21px;
  width: 200px;
  color: #858c90;
  font-family: "Open Sans", "DejaVu Sans", sans-serif;
  font-size: 10px;
  line-height: 15px;
  white-space: nowrap;
}
.watermark p {
  font-size: 13px;
}
.cursor {
  position: absolute;
  bottom: 94px;
  left: 100px;
  width: 9px;
  height: 14px;
}
```
